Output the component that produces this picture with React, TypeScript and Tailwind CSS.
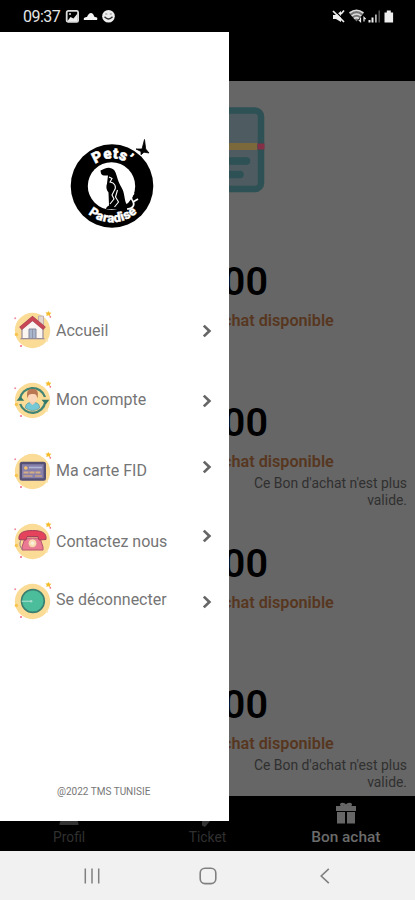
import type { ReactNode } from "react";

function Logo() {
  return (
    <svg width="90" height="94" viewBox="0 0 90 94" className="block">
      <defs>
        <path id="arcTop" d="M17.5 50 A27.5 27.5 0 0 1 72.5 50" />
        <path id="arcBottom" d="M8 49.5 A37 37 0 0 0 82 49.5" />
      </defs>
      <ellipse cx="45" cy="50" rx="41.3" ry="41.7" fill="#000" />
      <circle cx="44.5" cy="50" r="23.7" fill="#fff" />
      <path
        d="M33.5 34.5 l4.5-2 c3-1.5 7-1 9.5 2 c2 3 2.5 7 4 11 c2 5 5 8 5.5 13 c1 4 1 9 4 11 l-1 3.5 h-21 c0-2 2-3 3-3.5 l-.5-13 c-2.5-3-2.5-6-1.5-9 l1-8 c-3 0-6 .5-7-2 z"
        fill="#000"
      />
      <path
        d="M42 41 l3 1.5 l-2 3.5 c5 1 7 5 4 9 l-2 4 l2 4 -4 5 M50.5 54 l-2 7 l3 5 -4 5"
        fill="none"
        stroke="#fff"
        strokeWidth="1.1"
      />
      <path d="M60 73 c6 0 8-4 6-7.5 c-2.5-3-2-6 1-8.5 M66 66 l5-3" fill="none" stroke="#fff" strokeWidth="1.7" />
      <path d="M69 13 l6 0 l2.5-9.5 l1.2 9.5 l3.3 4 l-5 -.8 l-3 2.5 l0-3.2 z" fill="#000" stroke="#000" strokeWidth=".8" />
      <text fill="#fff" stroke="#fff" strokeWidth=".5" fontSize="15" fontWeight="900" fontFamily="Roboto, sans-serif" letterSpacing=".3">
        <textPath href="#arcTop" startOffset="50%" textAnchor="middle">
          Pets’
        </textPath>
      </text>
      <text fill="#fff" stroke="#fff" strokeWidth=".3" fontSize="13" fontWeight="900" fontFamily="Roboto, sans-serif" letterSpacing=".3">
        <textPath href="#arcBottom" startOffset="51%" textAnchor="middle">
          Paradise
        </textPath>
      </text>
    </svg>
  );
}

// yellow disc with confetti shared by every menu icon
function Badge({ children }: { children: ReactNode }) {
  return (
    <svg width="40" height="40" viewBox="0 0 40 40" className="block shrink-0">
      <circle cx="20.5" cy="20.5" r="17.7" fill="#fbdc97" />
      <path d="M36.2 1 l1.2 1.6 2 .2 -1.4 1.4 .3 2 -2-1 -2 .9 .4-2 -1.3-1.5 2-.2z" fill="#f5bd2e" />
      <circle cx="3.2" cy="8.3" r="1" fill="#f28ca0" />
      <circle cx="38.3" cy="6.8" r=".9" fill="#ee6884" />
      <circle cx="9" cy="36" r="1.1" fill="#f0708c" />
      <circle cx="4.4" cy="24.5" r="1.7" fill="#f7c450" />
      <circle cx="35" cy="30.5" r="1.2" fill="#fce6b4" />
      {children}
    </svg>
  );
}

function HomeIcon() {
  return (
    <Badge>
      <path d="M26.5 6 h5 v10 h-5z" fill="#e3d6cf" stroke="#b5a6a6" strokeWidth=".8" />
      <path d="M10 18 L20.5 9 L31 18 V28.5 H10z" fill="#fbf5f2" stroke="#9a8c98" strokeWidth="1.2" />
      <path d="M8.5 18.5 L20.5 8.5 L32.5 18.5" fill="none" stroke="#a34a58" strokeWidth="4.2" />
      <path d="M8.8 18.2 L20.5 8.5 L32.2 18.2" fill="none" stroke="#c94755" strokeWidth="3" />
      <path d="M17 19 h7 v9.5 h-7z" fill="#a8b6cc" stroke="#85869c" strokeWidth="1" />
      <path d="M20.5 19 v9.5" stroke="#85869c" strokeWidth=".7" />
      <path d="M8.5 28.7 h24" stroke="#9a8c98" strokeWidth="1.2" />
    </Badge>
  );
}

function AccountIcon() {
  return (
    <Badge>
      <path d="M7.8 19 A13 13 0 0 1 33 17 M33.3 22 A13 13 0 0 1 8.2 24" fill="none" stroke="#438574" strokeWidth="2.3" />
      <path d="M4.5 20.8 l3.8-4.6 4 4.6z M29.5 19.8 l4.2 4.8 3.6-4.8z" fill="#347a68" />
      <path d="M13.5 28 c0-4.5 2.5-5.5 7-5.5 s7 1 7 5.5 c-4 3.3-10 3.3-14 0z" fill="#74c9d4" stroke="#5695a5" strokeWidth=".7" />
      <path d="M18 20 h5 v3 l-2.5 2 -2.5-2z" fill="#f7cdb0" />
      <circle cx="20.5" cy="17.5" r="4.5" fill="#fad6bb" />
      <path d="M15.5 18.5 c-1.6-8 1-9.5 5-9.5 s6.6 1.5 5 9.5 c-1-4-2-4.5-5-4.5 s-4 .5-5 4.5z" fill="#b97852" />
    </Badge>
  );
}

function CardIcon() {
  return (
    <Badge>
      <rect x="8.8" y="12" width="24" height="16.5" rx="1.3" fill="#8680aa" stroke="#565074" strokeWidth="2.4" />
      <path d="M17 16.5 h13" stroke="#b1b5d6" strokeWidth="1.6" />
      <circle cx="13.8" cy="17" r="1.8" fill="#f5c16d" />
      <path d="M11.5 21.5 h18" stroke="#d5ad82" strokeWidth="1.8" strokeDasharray="5 1" />
      <path d="M11.5 25 h9 M23 25 h7" stroke="#c9a183" strokeWidth="1.6" />
    </Badge>
  );
}

function PhoneIcon() {
  return (
    <Badge>
      <path d="M13 17 h15 l3 9 v3 H10 v-3z" fill="#ec7993" stroke="#b45570" strokeWidth="1" />
      <path d="M7 18.5 c-1-7 5-9 13.5-9 s14.5 2 13.5 9 l-7 .5 -1-3.5 h-11 l-1 3.5z" fill="#e5425c" stroke="#a2405a" strokeWidth="1" />
      <path d="M9 19 c-2 4-1 8 2 9.5" fill="none" stroke="#8f7a88" strokeWidth="1" />
      <circle cx="20.5" cy="22.3" r="4.3" fill="#fbdcb0" stroke="#dd8393" strokeWidth=".8" />
      <circle cx="20.5" cy="22.3" r="1.7" fill="#f7efe0" />
    </Badge>
  );
}

function LogoutIcon() {
  return (
    <Badge>
      <circle cx="20.9" cy="20" r="11.4" fill="#4bbd9b" stroke="#397e70" strokeWidth="1.6" />
      <path d="M9.8 20.3 h9" stroke="#9adbc9" strokeWidth="1.3" />
      <circle cx="19.2" cy="20.3" r="1.2" fill="#a3dccc" />
    </Badge>
  );
}

function Chevron() {
  return (
    <svg width="10" height="14" viewBox="0 0 10 14" className="block">
      <path d="M1.8 1.6 L7.4 7 L1.8 12.4" fill="none" stroke="#666" strokeWidth="2.7" />
    </svg>
  );
}

const menu = [
  { label: "Accueil", icon: <HomeIcon />, row: "h-[70px]", text: "pt-[11px]", arrow: "pt-[14px]" },
  { label: "Mon compte", icon: <AccountIcon />, row: "h-[71px]", text: "pt-[10px]", arrow: "pt-[14px]" },
  { label: "Ma carte FID", icon: <CardIcon />, row: "h-[70px]", text: "pt-[10px]", arrow: "pt-[9px]" },
  { label: "Contactez nous", icon: <PhoneIcon />, row: "h-[60px]", text: "pt-[11px]", arrow: "pt-[8px]" },
  { label: "Se déconnecter", icon: <LogoutIcon />, row: "h-[60px]", text: "pt-[9px]", arrow: "pt-[14px]" },
];

const vouchers = [
  { id: 1, expired: false },
  { id: 2, expired: true },
  { id: 3, expired: false },
  { id: 4, expired: true },
];

function StatusBar() {
  return (
    <div className="flex h-8 items-center justify-between bg-black pl-[23px] pr-[21px] pt-[2px] text-white">
      <div className="flex items-center">
        <span className="w-[38px] text-[16px] tracking-[-0.5px] text-[#e6e6e6]">09:37</span>
        <svg width="56" height="16" viewBox="0 0 56 16" className="ml-1">
          <rect x="1.7" y="1.9" width="11.4" height="11" rx="1.5" fill="none" stroke="#ddd" strokeWidth="1.8" />
          <path d="M2.5 12 l3-4 3 1.5 4-5 v7.5z" fill="#eee" />
          <circle cx="5" cy="5" r="1" fill="#ddd" />
          <path d="M19 11 c-1-2 1-3 3-3 c1-3.5 4-5.5 6-3 c1 1 1 3 2 3 c2 0 3 1 2 3z" fill="#f5f5f5" />
          <circle cx="43.5" cy="7.3" r="6.3" fill="#eee" />
          <path d="M39.5 7.8 q4 4.5 8 0" fill="none" stroke="#333" strokeWidth="1.4" />
          <path d="M40.3 5 h2 M44.8 5 h2" stroke="#888" strokeWidth="1" />
        </svg>
      </div>
      <svg width="62" height="16" viewBox="0 0 62 16">
        <path d="M1 6 h3 l5-4 v11 l-5-3 h-3z" fill="#eee" />
        <path d="M2 1 l11 11" stroke="#000" strokeWidth="1.2" />
        <path d="M1 2 l11 11 M9 5 l3-3.5" stroke="#eee" strokeWidth="1.7" />
        <path d="M17.5 4.5 q7-6 14 0 l-7 8z" fill="#777" />
        <path d="M17.5 4 q7-5.5 14 0 M19.7 7 q4.8-4 9.6 0 M22 9.6 q2.5-2 5 0" fill="none" stroke="#ddd" strokeWidth="1.6" />
        <path d="M28.5 8.5 v4 l-1.7-1.7 M32 12.5 v-4 l1.7 1.7" fill="none" stroke="#eee" strokeWidth="1.2" />
        <path d="M37.5 13.5 v-2.5 M40.5 13.5 v-5" stroke="#eee" strokeWidth="2" />
        <path d="M43.9 13.5 v-8" stroke="#bbb" strokeWidth="1.7" />
        <path d="M47.2 13.5 v-12" stroke="#555" strokeWidth="1.5" />
        <path d="M52.5 3.5 h2.3 v-2 h4 v2 h2.3 v10 h-8.6z" fill="#eee" />
      </svg>
    </div>
  );
}

function Drawer() {
  return (
    <aside className="absolute left-0 top-8 z-10 flex h-[789px] w-[229px] flex-col bg-white">
      <div className="pl-[67px] pt-[104px]">
        <Logo />
      </div>
      <nav className="flex flex-col pl-3 pt-20">
        {menu.map((item) => (
          <div key={item.label} className={`flex items-start ${item.row}`}>
            {item.icon}
            <span className={`ml-[4px] w-[146px] whitespace-nowrap text-[16px] leading-5 text-[#757575] ${item.text}`}>
              {item.label}
            </span>
            <span className={item.arrow}>
              <Chevron />
            </span>
          </div>
        ))}
      </nav>
      <footer className="mt-auto pb-[22px] pl-[57px] text-[10px] leading-[14px] text-[#777]">@2022 TMS TUNISIE</footer>
    </aside>
  );
}

function VoucherList() {
  return (
    <main className="flex h-[715px] flex-col overflow-hidden bg-[#666] pl-[220px]">
      <div className="h-[171px] shrink-0 pl-[9px] pt-[25px]">
        <svg width="36" height="87" viewBox="0 0 36 87" className="block">
          <rect x="-40" y="4.5" width="72" height="78.5" rx="6" fill="#4e5b61" stroke="#2d5154" strokeWidth="6.5" />
          <path d="M0 40.5 h28" stroke="#7b693b" strokeWidth="7" />
          <path d="M28.5 40.5 h7" stroke="#842f45" strokeWidth="6" />
          <path d="M0 55 h17.5 M0 68.5 h11" stroke="#2d5154" strokeWidth="7.5" strokeLinecap="round" />
        </svg>
      </div>
      {vouchers.map((v) => (
        <section key={v.id} className="h-[141px] shrink-0">
          <div className="h-[59px] w-[48px] text-right text-[39.5px] font-semibold leading-[59px] text-black">00</div>
          <div className="h-[19px] w-[114px] whitespace-nowrap pl-[3px] text-[16.2px] font-semibold leading-[19px] text-[#57361f]">
            chat disponible
          </div>
          {v.expired && (
            <p className="ml-auto mr-[8px] mt-[4px] w-[160px] text-right text-[13.9px] leading-[17px] text-[#303030]">
              Ce Bon d'achat n'est plus valide.
            </p>
          )}
        </section>
      ))}
    </main>
  );
}

function TabBar() {
  return (
    <div className="grid h-[55px] grid-cols-3 bg-black text-center">
      <div className="flex flex-col items-center text-[13.8px] leading-5 text-[#303030]">
        <svg width="20" height="31" viewBox="0 0 20 31" className="block">
          <path d="M.5 29 v-1 c0-4 4-6 9.5-6 s9.5 2 9.5 6 v1z" fill="#333" />
        </svg>
        Profil
      </div>
      <div className="flex flex-col items-center text-[13.8px] leading-5 text-[#303030]">
        <svg width="20" height="31" viewBox="0 0 20 31" className="block">
          <path d="M5 25 l8-8 v8 l-5 6 -3-1.5z" fill="#333" />
        </svg>
        Ticket
      </div>
      <div className="flex flex-col items-center text-[15.4px] font-medium leading-5 text-[#6b6b6b]">
        <svg width="20" height="31" viewBox="0 0 20 31" className="block">
          <path d="M0 10 h20 v5 H0z M1 16 h8 v11.5 H1z M11 16 h8 v11.5 h-8z" fill="#666" />
          <path d="M10 10.5 C4.5 10.5 4 7.7 6.3 7.7 q2.7 0 3.7 2.8 q1-2.8 3.7-2.8 C16 7.7 15.5 10.5 10 10.5z" fill="none" stroke="#666" strokeWidth="2" />
        </svg>
        Bon achat
      </div>
    </div>
  );
}

function SystemNav() {
  return (
    <div className="flex h-[49px] items-center bg-[#f1f1f1] pl-[84px]">
      <svg width="16" height="16" viewBox="0 0 16 16">
        <path d="M1.3 .5 v15 M8 .5 v15 M14.7 .5 v15" stroke="#808080" strokeWidth="1.5" />
      </svg>
      <svg width="18" height="18" viewBox="0 0 18 18" className="ml-[99px]">
        <rect x="1.2" y="1.2" width="15.6" height="15.4" rx="4.8" fill="none" stroke="#808080" strokeWidth="1.6" />
      </svg>
      <svg width="10" height="16" viewBox="0 0 10 16" className="ml-[103px]">
        <path d="M8.8 .8 L1.2 8 L8.8 15.2" fill="none" stroke="#808080" strokeWidth="1.6" />
      </svg>
    </div>
  );
}

export default function App() {
  return (
    <div className="relative h-[900px] w-[415px] overflow-hidden bg-black font-['Roboto',sans-serif]">
      <StatusBar />
      <div className="h-[49px] bg-black" />
      <VoucherList />
      <TabBar />
      <SystemNav />
      <Drawer />
    </div>
  );
}
